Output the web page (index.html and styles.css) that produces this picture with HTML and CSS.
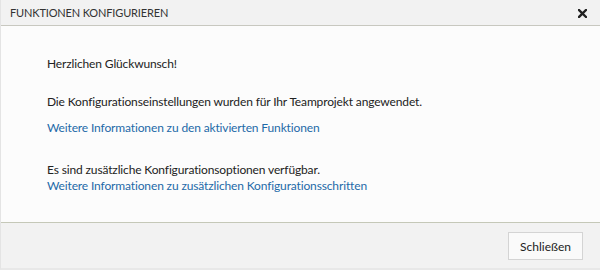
FILE: index.html
```html
<!DOCTYPE html>
<html lang="de">
    <head>
        <meta charset="UTF-8">
        <meta name="viewport" content="width=device-width, initial-scale=1.0">
        <title>Funktionen konfigurieren</title>
        <link rel="stylesheet" href="styles.css">
    </head>
    <body>
        <div class="dialog">
            <!--Titelleiste-->
            <div class="titelleiste">
                <span class="titel">FUNKTIONEN KONFIGURIEREN</span>
                <span class="schliessenX" title="Schließen">
                    <svg width="9" height="9" viewBox="0 0 9 9">
                        <path d="M1 1 L8 8 M8 1 L1 8" stroke="#222" stroke-width="2.4" stroke-linecap="square"/>
                    </svg>
                </span>
            </div>
            <!--Inhalt-->
            <div class="inhalt">
                <p class="gruss">Herzlichen Glückwunsch!</p>
                <p class="info">Die Konfigurationseinstellungen wurden für Ihr Teamprojekt angewendet.</p>
                <a class="link" href="#">Weitere Informationen zu den aktivierten Funktionen</a>
                <p class="info2">Es sind zusätzliche Konfigurationsoptionen verfügbar.</p>
                <a class="link" href="#">Weitere Informationen zu zusätzlichen Konfigurationsschritten</a>
            </div>
            <!--Fußleiste-->
            <div class="fussleiste">
                <button class="btSchliessen">Schließen</button>
            </div>
        </div>
    </body>
</html>
```
FILE: styles.css
```css
/*Reset*/
html,
body,
p {
    margin: 0;
    padding: 0;
}

html {
    box-sizing: border-box;
}

*, *::before, *::after {
    box-sizing: inherit;
}

/*Dialog*/
body {
    width: 600px;
    height: 270px;
    font-family: Lato, "Noto Sans", sans-serif;
    font-size: 12px;
    color: #222;
    background: #f4f4f4;
}

.dialog {
    display: flex;
    flex-direction: column;
    height: 270px;
    border-left: 1px solid #e4e4e4;
    border-bottom: 2px solid #e8e8e8;
}

.titelleiste {
    display: flex;
    justify-content: space-between;
    align-items: center;
    height: 26px;
    padding: 0 13px 0 9px;
    background: #f2f2f2;
    border-bottom: 1px solid #c8c8c0;
}

.titel {
    font-size: 11px;
    letter-spacing: -0.15px;
    color: #333;
}

.schliessenX {
    display: flex;
    margin-top: 2px;
}

.inhalt {
    display: flex;
    flex-direction: column;
    align-items: flex-start;
    height: 197px;
    padding: 30px 0 0 46px;
    background: #fcfcfc;
    border-bottom: 1px solid #c5c8b8;
    line-height: 16px;
    letter-spacing: -0.14px;
}

.gruss {
    margin-bottom: 22px;
}

.info {
    margin-bottom: 10px;
}

.info2 {
    margin-top: 26px;
}

.link {
    color: #1e6aa8;
    text-decoration: none;
}

.fussleiste {
    display: flex;
    justify-content: flex-end;
    align-items: center;
    flex: 1;
    padding-right: 17px;
    background: #f2f2f2;
}

.btSchliessen {
    width: 75px;
    height: 28px;
    margin-top: 1px;
    font-family: inherit;
    font-size: 12px;
    color: #222;
    background: #fafafa;
    border: 1px solid #d4d4d4;
    border-radius: 0;
}
```
